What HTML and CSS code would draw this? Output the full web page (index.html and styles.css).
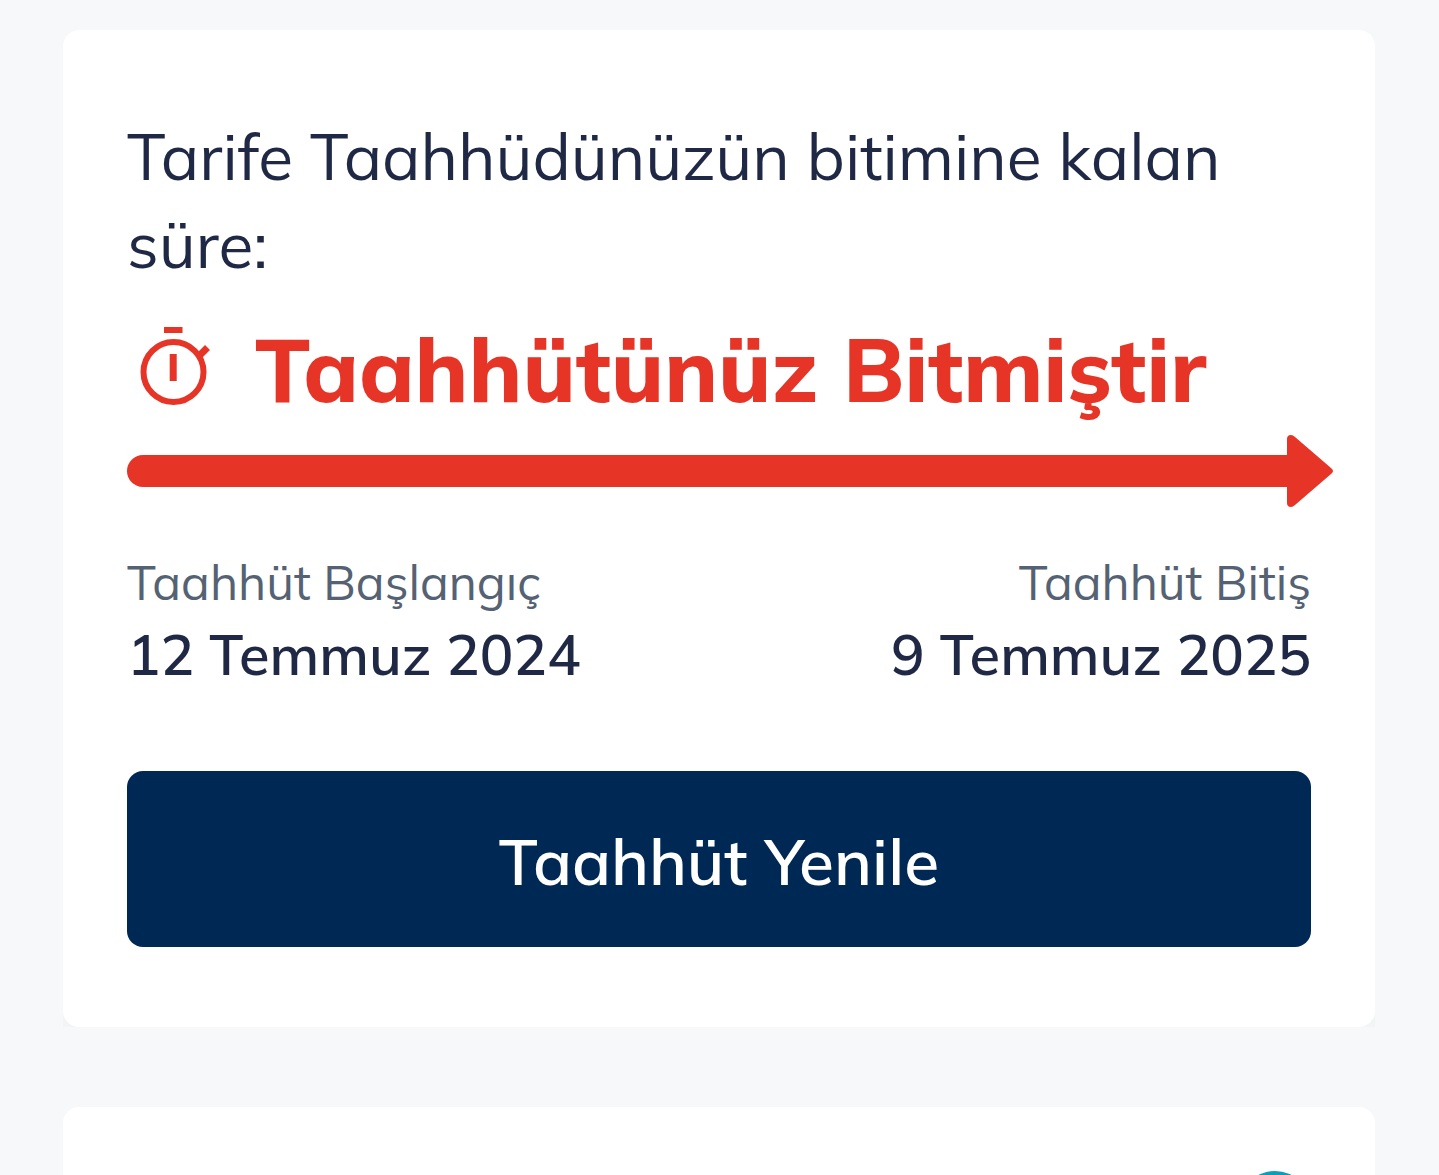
FILE: index.html
```html
<!DOCTYPE html>
<html lang="tr">
<head>
<meta charset="utf-8">
<meta name="viewport" content="width=device-width, initial-scale=1">
<title>Taahhüt</title>
<link rel="stylesheet" href="styles.css">
</head>
<body>
<main class="page">
  <div class="card-shell">
  <section class="card">
    <p class="lead">Tarife Taahhüdünüzün bitimine kalan süre:</p>
    <div class="status">
      <svg class="status-icon" viewBox="0 0 96 96" aria-hidden="true">
        <path d="M37 11h18.500" fill="none" stroke="currentColor" stroke-width="6"/>
        <path d="M46.200 35v27M71 38l9.500-9.500" fill="none" stroke="currentColor" stroke-width="7"/>
        <circle cx="46.500" cy="53" r="30" fill="none" stroke="currentColor" stroke-width="6"/>
      </svg>
      <h2 class="status-text">Taahhütünüz Bitmiştir</h2>
    </div>
    <div class="progress">
      <div class="progress-bar"></div>
      <svg class="progress-head" viewBox="0 0 46 72" aria-hidden="true">
        <path d="M0 4Q0 0 4 0Q6 0 8 2L44 33Q48 36 44 39L8 70Q6 72 4 72Q0 72 0 68Z" fill="currentColor"/>
      </svg>
    </div>
    <dl class="dates">
      <div class="date">
        <dt class="date-label">Taahhüt Başlangıç</dt>
        <dd class="date-value">12 Temmuz 2024</dd>
      </div>
      <div class="date date-end">
        <dt class="date-label">Taahhüt Bitiş</dt>
        <dd class="date-value">9 Temmuz 2025</dd>
      </div>
    </dl>
    <button class="renew" type="button">Taahhüt Yenile</button>
  </section>
  </div>
  <section class="card card-next">
    <span class="badge"></span>
  </section>
</main>
</body>
</html>
```
FILE: styles.css
```css
* { box-sizing: border-box; }
body {
  margin: 0;
  background: #f7f8fa;
  color: #1f2844;
  font-family: Mulish, Muli, Lato, sans-serif;
}
.page {
  display: flex;
  flex-direction: column;
  gap: 80px;
  height: 100vh;
  overflow: hidden;
  padding: 30px 64px 0 63px;
}
.card-shell {
  flex: none;
  border-radius: 16px 16px 0 0;
  background: #f3f4f6;
}
.card {
  flex: none;
  padding: 82px 64px 80px;
  border-radius: 16px;
  background: #fff;
}
.lead {
  margin: 0;
  font-size: 64px;
  line-height: 88px;
}
.status {
  display: flex;
  align-items: center;
  gap: 32px;
  height: 112px;
  margin-top: 23px;
  color: #e63426;
}
.status-icon { flex: none; width: 96px; height: 96px; }
.status-text {
  margin: 0;
  padding-top: 4px;
  font-size: 88px;
  font-weight: 800;
  line-height: 112px;
  white-space: nowrap;
}
.progress {
  display: flex;
  align-items: center;
  margin: 12px -22px 0 0;
  color: #e63426;
}
.progress-bar {
  flex: 1;
  height: 32px;
  border-radius: 16px 0 0 16px;
  background: currentColor;
}
.progress-head { flex: none; width: 46px; height: 72px; }
.dates {
  display: flex;
  justify-content: space-between;
  margin: 43px 0 0;
}
.date-end { text-align: right; }
.date-label {
  color: #556273;
  font-size: 48px;
  line-height: 64px;
}
.date-value {
  margin: 0;
  font-size: 56px;
  font-weight: 600;
  line-height: 80px;
}
.renew {
  display: block;
  width: 100%;
  height: 176px;
  margin-top: 77px;
  padding: 4px 0 0;
  border: 0;
  border-radius: 16px;
  background: #002855;
  color: #fff;
  font: 600 64px/88px Mulish, Muli, Lato, sans-serif;
}
.card-next {
  display: flex;
  justify-content: flex-end;
  padding: 64px 64px 80px;
}
.badge {
  width: 72px;
  height: 72px;
  border-radius: 50%;
  background: #0a9fb5;
}
```
